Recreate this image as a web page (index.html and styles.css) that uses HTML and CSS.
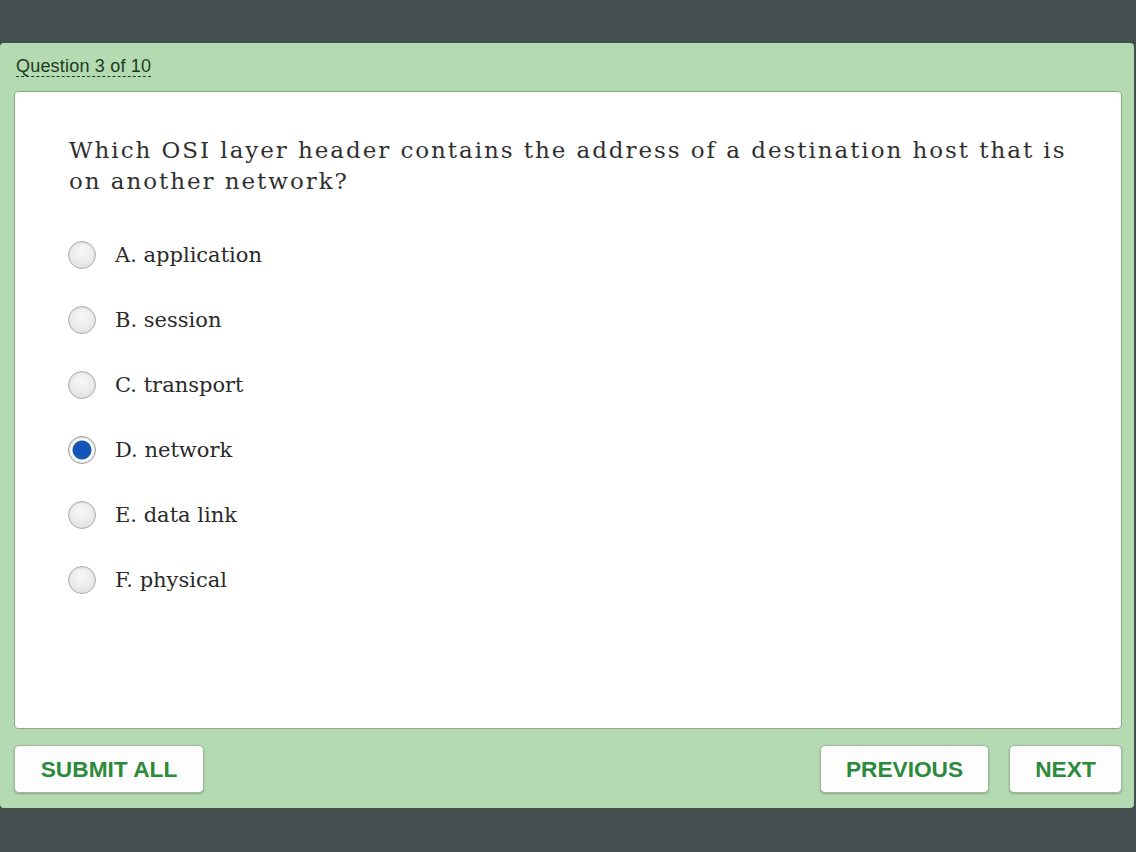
FILE: index.html
```html
<!DOCTYPE html>
<html>
<head>
<meta charset="utf-8">
<link rel="stylesheet" href="styles.css">
</head>
<body>
<div class="panel">
  <div class="header"><span class="counter">Question 3 of 10</span></div>
  <div class="card">
    <p class="question">Which OSI layer header contains the address of a destination host that is on another network?</p>
    <ul class="options">
      <li class="option"><span class="radio"></span><span class="label">A. application</span></li>
      <li class="option"><span class="radio"></span><span class="label">B. session</span></li>
      <li class="option"><span class="radio"></span><span class="label">C. transport</span></li>
      <li class="option"><span class="radio checked"></span><span class="label">D. network</span></li>
      <li class="option"><span class="radio"></span><span class="label">E. data link</span></li>
      <li class="option"><span class="radio"></span><span class="label">F. physical</span></li>
    </ul>
  </div>
  <div class="footer">
    <button class="btn btn-submit">SUBMIT ALL</button>
    <div class="spacer"></div>
    <button class="btn btn-prev">PREVIOUS</button>
    <button class="btn btn-next">NEXT</button>
  </div>
</div>
</body>
</html>
```

FILE: styles.css
```css
html, body {
  margin: 0;
  padding: 0;
  background: #434f4e;
  width: 1136px;
  height: 852px;
  overflow: hidden;
}

.panel {
  margin-top: 43px;
  width: 1134px;
  height: 765px;
  box-sizing: border-box;
  background: #b3dab1;
  border-radius: 4px;
  padding: 0 12px 0 14px;
  display: flex;
  flex-direction: column;
}

.header {
  height: 48px;
  display: flex;
  align-items: flex-end;
  padding-left: 2px;
  padding-bottom: 14px;
  box-sizing: border-box;
}

.counter {
  font-family: "Liberation Sans", Arial, sans-serif;
  font-size: 18px;
  color: #1f3a22;
  border-bottom: 1px dashed #1f3a22;
  line-height: 18px;
  padding-bottom: 1px;
  letter-spacing: 0.2px;
}

.card {
  height: 638px;
  box-sizing: border-box;
  background: #ffffff;
  border: 1px solid #8ea68c;
  border-radius: 4px;
  padding: 43px 30px 0 54px;
}

.question {
  margin: 0;
  font-family: "DejaVu Serif", "Liberation Serif", serif;
  font-size: 23px;
  line-height: 31px;
  letter-spacing: 1.95px;
  color: #303030;
}

.options {
  list-style: none;
  margin: 44px 0 0 0;
  padding: 0;
  display: flex;
  flex-direction: column;
  gap: 37px;
}

.option {
  display: flex;
  align-items: center;
  height: 28px;
}

.radio {
  width: 28px;
  height: 28px;
  box-sizing: border-box;
  border-radius: 50%;
  border: 1px solid #adadad;
  background: radial-gradient(circle at 50% 35%, #f8f8f8 0%, #e9e9e9 60%, #dadada 100%);
  box-shadow: inset 0 1px 2px rgba(0,0,0,0.08);
  flex: none;
  margin-left: -1px;
}

.radio.checked {
  border: 1px solid #9a9a9a;
  background: radial-gradient(circle, #1456b8 0 8.5px, #2a5d9a 9px, #ffffff 10px, #f2f2f2 12px);
}

.label {
  margin-left: 19px;
  font-family: "DejaVu Serif", "Liberation Serif", serif;
  font-size: 21px;
  letter-spacing: 0px;
  color: #2a2a2a;
}

.footer {
  margin-top: 16px;
  display: flex;
  gap: 20px;
}

.spacer {
  flex: 1;
}

.btn {
  height: 48px;
  background: #fdfdfd;
  border: 1px solid #9fb89d;
  border-radius: 5px;
  box-shadow: 0 1px 2px rgba(0,0,0,0.25);
  font-family: "Liberation Sans", Arial, sans-serif;
  font-weight: bold;
  font-size: 22.7px;
  color: #2b8a3b;
  padding: 0;
  letter-spacing: 0;
}

.btn-submit { width: 190px; }
.btn-prev { width: 169px; }
.btn-next { width: 113px; }
```
